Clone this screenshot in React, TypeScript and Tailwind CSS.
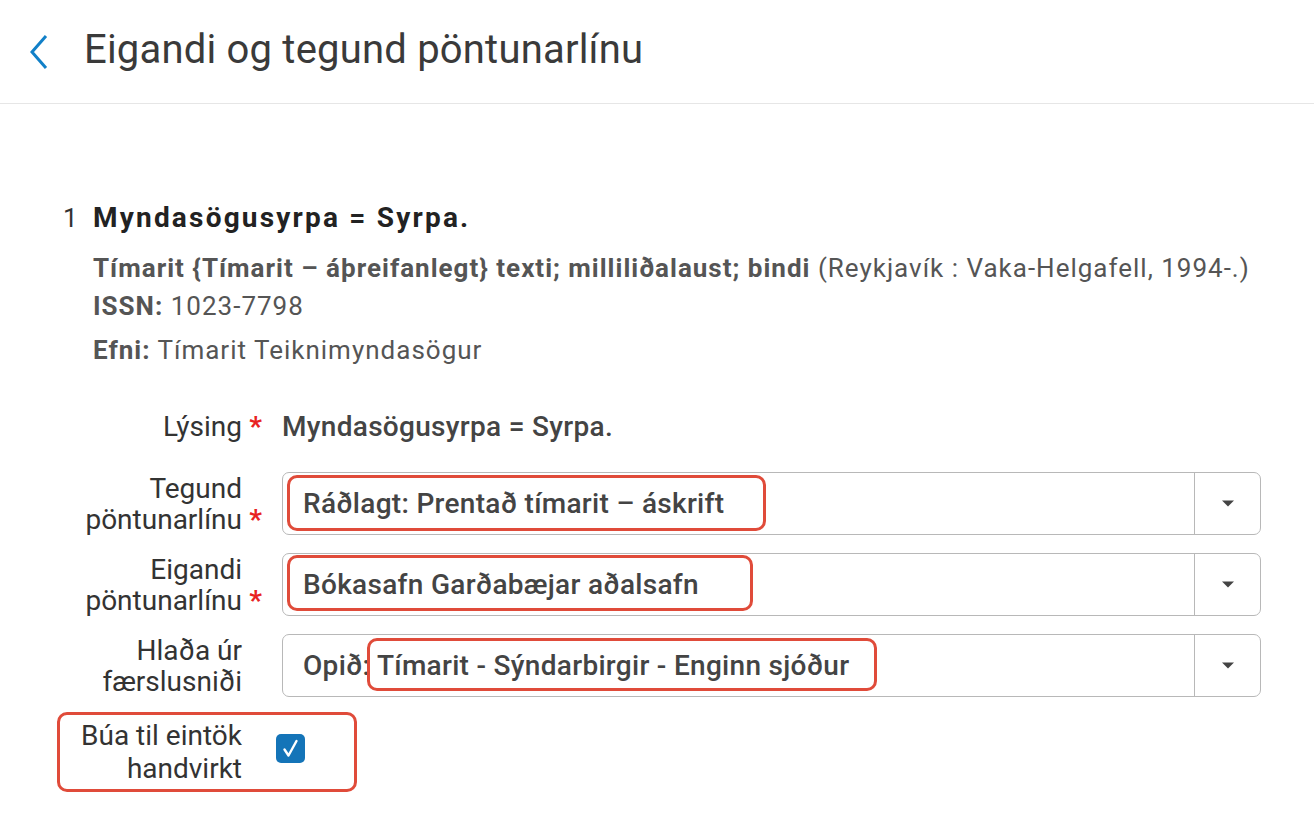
import React from 'react'

const font = { fontFamily: 'Roboto, "Noto Sans", sans-serif' }

function Caret() {
  return (
    <svg width="14" height="7" viewBox="0 0 14 7">
      <path d="M1 0.5h12L7 6.5z" fill="#444" />
    </svg>
  )
}

function Label({ lines, required }: { lines: string[]; required?: boolean }) {
  return (
    <div className="flex w-[262px] shrink-0 items-end justify-end">
      <div className="text-right text-[28px] leading-[31px] text-[#333]">
        {lines.map((l) => (
          <div key={l}>{l}</div>
        ))}
      </div>
      <span className="w-[20px] text-right text-[28px] font-bold leading-[31px] text-[#e82222]">{required ? '*' : ''}</span>
    </div>
  )
}

function Select({ text, mark }: { text: string; mark: string }) {
  return (
    <div className="relative ml-[20px] flex h-[63px] w-[979px] rounded-[7px] border border-[#b8b8b8] bg-white">
      <div className="flex flex-1 items-center overflow-hidden whitespace-nowrap pl-[20px] text-[28px] font-medium tracking-[0.3px] text-[#444]">
        {text}
      </div>
      <div className="flex w-[66px] items-center justify-center border-l border-[#b8b8b8]">
        <Caret />
      </div>
      <div className={`pointer-events-none absolute rounded-[10px] border-[3px] border-[#e04b3a] ${mark}`} />
    </div>
  )
}

export default function App() {
  return (
    <div style={font} className="min-h-[830px] w-[1314px] bg-white text-[#333]">
      <header className="flex h-[104px] items-center border-b border-[#e6e6e6]">
        <svg className="ml-[27px]" width="24" height="36" viewBox="0 0 24 36">
          <path d="M19 2L5 18l14 16" fill="none" stroke="#1180c8" strokeWidth="3" />
        </svg>
        <h1 className="ml-[33px] pb-[4px] text-[40px] font-normal tracking-[0.2px] text-[#3a3a3a]">
          Eigandi og tegund pöntunarlínu
        </h1>
      </header>

      <section className="pl-[63px] pt-[93px]">
        <div className="flex">
          <span className="w-[30px] text-[26px] leading-[42px] text-[#333]">1</span>
          <div>
            <div className="text-[28px] font-bold leading-[42px] tracking-[2.2px] text-[#222]">Myndasögusyrpa = Syrpa.</div>
            <div className="mt-[10px] whitespace-nowrap text-[26px] leading-[38px] tracking-[1px] text-[#555]">
              <span className="font-bold">Tímarit {'{'}Tímarit – áþreifanlegt{'}'} texti; milliliðalaust; bindi</span>{' '}
              (Reykjavík : Vaka-Helgafell, 1994-.)
            </div>
            <div className="text-[26px] leading-[38px] tracking-[1px] text-[#555]">
              <span className="font-bold">ISSN:</span> 1023-7798
            </div>
            <div className="mt-[6px] text-[26px] leading-[38px] tracking-[1px] text-[#555]">
              <span className="font-bold">Efni:</span> Tímarit Teiknimyndasögur
            </div>
          </div>
        </div>
      </section>

      <section className="pt-[42px]">
        <div className="flex items-center">
          <Label lines={['Lýsing']} required />
          <span className="ml-[20px] text-[28px] font-medium leading-[31px] tracking-[0.3px] text-[#444]">
            Myndasögusyrpa = Syrpa.
          </span>
        </div>

        <div className="mt-[30px] flex items-center">
          <Label lines={['Tegund', 'pöntunarlínu']} required />
          <Select text="Ráðlagt: Prentað tímarit – áskrift" mark="left-[4px] top-[2px] h-[56px] w-[479px]" />
        </div>

        <div className="mt-[18px] flex items-center">
          <Label lines={['Eigandi', 'pöntunarlínu']} required />
          <Select text="Bókasafn Garðabæjar aðalsafn" mark="left-[4px] top-[1px] h-[56px] w-[466px]" />
        </div>

        <div className="mt-[18px] flex items-center">
          <Label lines={['Hlaða úr', 'færslusniði']} />
          <Select text="Opið: Tímarit - Sýndarbirgir - Enginn sjóður" mark="left-[84px] top-[3px] h-[53px] w-[510px]" />
        </div>

        <div className="relative mt-[15px] flex h-[80px] items-center">
          <div className="flex w-[242px] justify-end">
            <div className="text-right text-[28px] leading-[33px] text-[#333]">
              <div>Búa til eintök</div>
              <div>handvirkt</div>
            </div>
          </div>
          <div className="mb-[8px] ml-[34px] h-[29px] w-[29px] rounded-[5px] bg-[#1474b8]">
            <svg width="29" height="29" viewBox="0 0 29 29">
              <path d="M8.5 15.5l4 6L20.5 7" fill="none" stroke="#fff" strokeWidth="2.4" strokeLinecap="round" strokeLinejoin="round" />
            </svg>
          </div>
          <div className="pointer-events-none absolute left-[57px] top-0 h-[80px] w-[300px] rounded-[10px] border-[3px] border-[#e04b3a]" />
        </div>
      </section>
    </div>
  )
}
